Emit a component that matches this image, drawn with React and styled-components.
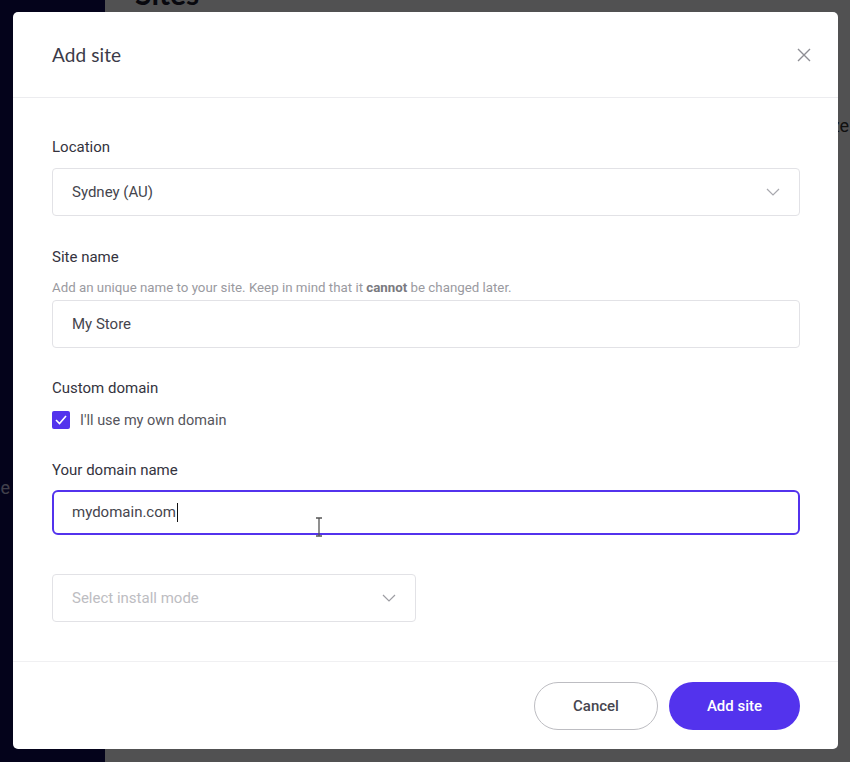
import React from 'react'
import styled, { createGlobalStyle } from 'styled-components'

const Global = createGlobalStyle`
  html, body { margin: 0; padding: 0; }
  body { font-family: Roboto, "Liberation Sans", sans-serif; background: #fbfafe; }
  * { box-sizing: border-box; }
`

const purple = '#5333ed'

const Page = styled.div`
  display: flex;
  width: 850px;
  height: 762px;
  overflow: hidden;
  position: relative;
`
const Sidebar = styled.div`
  width: 105px;
  background: #0e0b55;
  display: flex;
  flex-direction: column;
  align-items: flex-end;
  padding-top: 477px;
  overflow: hidden;
`
const SideItem = styled.div`
  color: #c9c8e8;
  font-size: 18px;
  white-space: nowrap;
  margin-right: 95px;
`
const Main = styled.div`
  flex: 1;
  padding: 0 0 0 30px;
  overflow: hidden;
`
const PageTitle = styled.h1`
  margin: -25px 0 0;
  font-family: Lato, sans-serif;
  font-size: 30px;
  font-weight: 700;
  color: #1a1a2e;
`
const ColHead = styled.div`
  display: flex;
  justify-content: flex-end;
  margin-top: 104px;
  margin-right: 1px;
  font-size: 18px;
  color: #333;
`
const Overlay = styled.div`
  position: absolute;
  inset: 0;
  background: rgba(0, 0, 0, 0.68);
`
const Modal = styled.div`
  position: absolute;
  left: 13px;
  top: 12px;
  width: 825px;
  height: 737px;
  background: #fff;
  border-radius: 5px;
  display: flex;
  flex-direction: column;
`
const Header = styled.div`
  height: 86px;
  border-bottom: 1px solid #ececef;
  display: flex;
  align-items: center;
  justify-content: space-between;
  padding: 0 26px 0 39px;
`
const Title = styled.div`
  font-family: Lato, sans-serif;
  font-size: 19px;
  color: #3b3a48;
  letter-spacing: 0.1px;
`
const Close = styled.button`
  border: none;
  background: none;
  padding: 0;
  width: 16px;
  height: 16px;
  display: flex;
  cursor: pointer;
`
const Body = styled.div`
  flex: 1;
  padding: 39px 38px 0 39px;
  display: flex;
  flex-direction: column;
`
const Label = styled.div`
  font-size: 15px;
  font-weight: 400;
  line-height: 20px;
  color: #34333e;
  margin-top: ${p => p.mt || 0}px;
`
const Help = styled.div`
  font-size: 13.3px;
  line-height: 16px;
  color: #9a9a9f;
  margin-top: 13px;
  b { font-weight: 700; color: #7a7a80; }
`
const Field = styled.div`
  height: ${p => (p.focus ? 45 : 48)}px;
  width: ${p => p.w || 'auto'};
  border: ${p => (p.focus ? `2px solid ${purple}` : '1px solid #e2e2e6')};
  border-radius: ${p => (p.focus ? 6 : 4)}px;
  display: flex;
  align-items: center;
  justify-content: space-between;
  padding: 0 ${p => (p.focus ? 18 : 19)}px;
  margin-top: ${p => p.mt || 0}px;
  font-size: 15px;
  color: ${p => (p.placeholder ? '#bdbdc2' : '#45454d')};
  position: relative;
`
const Caret = styled.span`
  display: inline-block;
  width: 1px;
  height: 19px;
  background: #111;
  vertical-align: middle;
  margin-left: 1px;
`
const IBeam = styled.svg`
  position: absolute;
  left: 261px;
  top: 25px;
`
const CheckRow = styled.label`
  display: flex;
  align-items: center;
  gap: 10px;
  margin-top: 13px;
  font-size: 14.5px;
  color: #55555c;
`
const Box = styled.span`
  width: 18px;
  height: 18px;
  border-radius: 2px;
  background: ${purple};
  display: flex;
  align-items: center;
  justify-content: center;
`
const Footer = styled.div`
  height: 88px;
  border-top: 1px solid #f0f0f2;
  display: flex;
  align-items: center;
  justify-content: flex-end;
  gap: 11px;
  padding: 0 38px 0 0;
`
const Button = styled.button`
  height: 48px;
  width: ${p => p.w}px;
  border-radius: 24px;
  font-family: Roboto, sans-serif;
  font-size: 15px;
  font-weight: 500;
  cursor: pointer;
  border: ${p => (p.primary ? 'none' : '1px solid #bdbdc2')};
  background: ${p => (p.primary ? purple : '#fff')};
  color: ${p => (p.primary ? '#fff' : '#46464f')};
`

const Chevron = ({ color = '#a8a8ae' }) => (
  <svg width="14" height="8" viewBox="0 0 14 8" fill="none">
    <path d="M1 1l6 6 6-6" stroke={color} strokeWidth="1.2" />
  </svg>
)

export default function App() {
  return (
    <Page>
      <Global />
      <Sidebar>
        <SideItem>Usage</SideItem>
      </Sidebar>
      <Main>
        <PageTitle>Sites</PageTitle>
        <ColHead>Size</ColHead>
      </Main>
      <Overlay />
      <Modal>
        <Header>
          <Title>Add site</Title>
          <Close aria-label="Close">
            <svg width="16" height="16" viewBox="0 0 16 16">
              <path d="M2 2l12 12M14 2L2 14" stroke="#8e8e94" strokeWidth="1.4" />
            </svg>
          </Close>
        </Header>
        <Body>
          <Label>Location</Label>
          <Field mt={11}>
            <span>Sydney (AU)</span>
            <Chevron />
          </Field>

          <Label mt={31}>Site name</Label>
          <Help>
            Add an unique name to your site. Keep in mind that it <b>cannot</b> be changed later.
          </Help>
          <Field mt={4}>
            <span>My Store</span>
          </Field>

          <Label mt={30}>Custom domain</Label>
          <CheckRow>
            <Box>
              <svg width="12" height="10" viewBox="0 0 12 10" fill="none">
                <path d="M1 5l3.5 3.5L11 1" stroke="#fff" strokeWidth="1.6" />
              </svg>
            </Box>
            I'll use my own domain
          </CheckRow>

          <Label mt={31}>Your domain name</Label>
          <Field focus mt={10}>
            <span>
              mydomain.com
              <Caret />
            </span>
            <IBeam width="8" height="20" viewBox="0 0 8 20">
              <path d="M1 1h6M4 1v18M1 19h6" stroke="#555" strokeWidth="1.3" fill="none" />
            </IBeam>
          </Field>

          <Field placeholder="true" w="364px" mt={39}>
            <span>Select install mode</span>
            <Chevron color="#9d9da3" />
          </Field>
        </Body>
        <Footer>
          <Button w={124}>Cancel</Button>
          <Button primary w={131}>Add site</Button>
        </Footer>
      </Modal>
    </Page>
  )
}
